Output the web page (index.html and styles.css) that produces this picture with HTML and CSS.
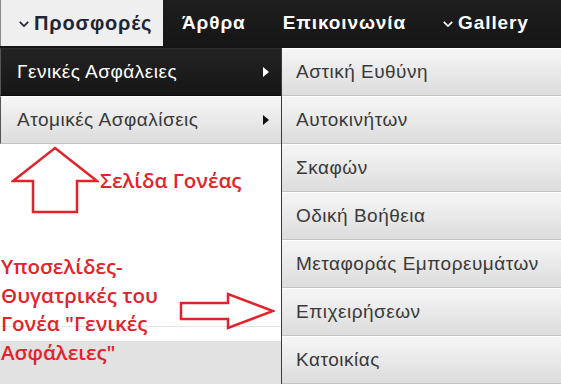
FILE: index.html
```html
<!DOCTYPE html>
<html lang="el">
<head>
    <meta charset="UTF-8">
    <meta name="viewport" content="width=device-width, initial-scale=1.0">
    <title>Προσφορές</title>
    <link rel="stylesheet" href="styles.css">
</head>
<body>
    <nav class="topbar">
        <a class="top-item top-item-open" href="#">
            <svg class="chevron" viewBox="0 0 10 6"><polyline points="0.8,0.8 5,5 9.2,0.8"/></svg>
            Προσφορές
        </a>
        <a class="top-item" href="#">Άρθρα</a>
        <a class="top-item" href="#">Επικοινωνία</a>
        <a class="top-item" href="#">
            <svg class="chevron" viewBox="0 0 10 6"><polyline points="0.8,0.8 5,5 9.2,0.8"/></svg>
            Gallery
        </a>
    </nav>

    <div class="stage">
        <div class="left-col">
            <ul class="menu">
                <li class="menu-item menu-item-active">Γενικές Ασφάλειες <span class="caret"></span></li>
                <li class="menu-item">Ατομικές Ασφαλίσεις <span class="caret"></span></li>
            </ul>

            <div class="notes">
                <div class="note note-parent">
                    <svg class="arrow-up" viewBox="0 0 88 68">
                        <polygon points="44,2 86,35 66,35 66,66 22,66 22,35 2,35"/>
                    </svg>
                    <span>Σελίδα Γονέας</span>
                </div>
                <div class="note note-children">
                    <p>Υποσελίδες-<br>Θυγατρικές του<br>Γονέα "Γενικές<br>Ασφάλειες"</p>
                    <svg class="arrow-right" viewBox="0 0 96 38">
                        <polygon points="2,11 49,11 49,2 94,19 49,36 49,27 2,27"/>
                    </svg>
                </div>
            </div>
        </div>

        <ul class="submenu">
            <li class="sub-item">Αστική Ευθύνη</li>
            <li class="sub-item">Αυτοκινήτων</li>
            <li class="sub-item">Σκαφών</li>
            <li class="sub-item">Οδική Βοήθεια</li>
            <li class="sub-item">Μεταφοράς Εμπορευμάτων</li>
            <li class="sub-item">Επιχειρήσεων</li>
            <li class="sub-item">Κατοικίας</li>
        </ul>
    </div>
</body>
</html>
```

FILE: styles.css
```css
body {
    margin: 0;
    padding: 0;
    width: 561px;
    height: 385px;
    overflow: hidden;
    font-family: "Liberation Sans", Arial, sans-serif;
    background: #ffffff;
}

ul {
    list-style: none;
    margin: 0;
    padding: 0;
}

/* top navigation */
.topbar {
    display: flex;
    height: 48px;
    background: linear-gradient(to bottom, #1f1f1f, #151515);
    box-sizing: border-box;
    padding-bottom: 2px;
}

.top-item {
    display: flex;
    align-items: center;
    gap: 5px;
    padding: 0 18px 0 19px;
    color: #ffffff;
    font-weight: bold;
    font-size: 19px;
    letter-spacing: 0.9px;
    text-decoration: none;
    white-space: nowrap;
}

.top-item-open {
    padding: 0 0 0 18px;
    background: #efefef;
    color: #1e2535;
    border-left: 1px solid #8a8a8a;
    width: 144px;
    font-size: 20px;
    letter-spacing: 0.8px;
}

.chevron {
    width: 10px;
    height: 6px;
    fill: none;
    stroke: currentColor;
    stroke-width: 1.7;
    margin-top: 2px;
}

/* dropdown area */
.stage {
    display: flex;
}

.left-col {
    width: 281px;
    display: flex;
    flex-direction: column;
}

.menu-item {
    display: flex;
    align-items: center;
    justify-content: space-between;
    height: 48px;
    padding: 0 12px 0 16px;
    box-sizing: border-box;
    font-size: 19px;
    letter-spacing: 0.5px;
    color: #3a3a3a;
    background: linear-gradient(to bottom, #f6f6f6, #dcdcdc);
    border-top: 1px solid #ffffff;
    border-bottom: 1px solid #c4c4c4;
    border-left: 1px solid #555;
}

.menu-item-active {
    background: linear-gradient(to bottom, #232323, #161616);
    color: #ffffff;
    border-top-color: #2b2b2b;
    border-bottom-color: #0d0d0d;
}

.caret {
    width: 0;
    height: 0;
    border-top: 5px solid transparent;
    border-bottom: 5px solid transparent;
    border-left: 6px solid #111;
}

.menu-item-active .caret {
    border-left-color: #ffffff;
}

.notes {
    height: 240px;
    background:
        linear-gradient(to bottom, transparent 182px, #e6e6e6 182px, #e6e6e6 183px, transparent 183px),
        linear-gradient(to bottom, #ffffff 197px, #e2e2e2 197px);
    color: #e2232b;
    font-family: "Open Sans", "Liberation Sans", sans-serif;
    font-weight: 600;
    font-size: 20.5px;
}

.note {
    display: flex;
    align-items: center;
}

.note polygon {
    fill: none;
    stroke: #e2232b;
    stroke-width: 2.5;
    stroke-linejoin: miter;
}

.note-parent {
    padding: 2px 0 0 11px;
    gap: 1px;
}

.arrow-up {
    width: 88px;
    height: 68px;
}

.note-children {
    margin-top: 38px;
    align-items: flex-end;
}

.note-children p {
    margin: 0;
    width: 178px;
    line-height: 28.5px;
    padding-left: 1px;
    white-space: nowrap;
}

.arrow-right {
    width: 96px;
    height: 38px;
    margin-bottom: 36px;
}

.submenu {
    flex: 1;
    border-left: 1px solid #3a3a3a;
}

.sub-item {
    display: flex;
    align-items: center;
    height: 48px;
    padding-left: 14px;
    box-sizing: border-box;
    font-size: 19px;
    letter-spacing: 0.5px;
    color: #3a3a3a;
    background: linear-gradient(to bottom, #f6f6f6, #dcdcdc);
    border-top: 1px solid #ffffff;
    border-bottom: 1px solid #c4c4c4;
}
```
